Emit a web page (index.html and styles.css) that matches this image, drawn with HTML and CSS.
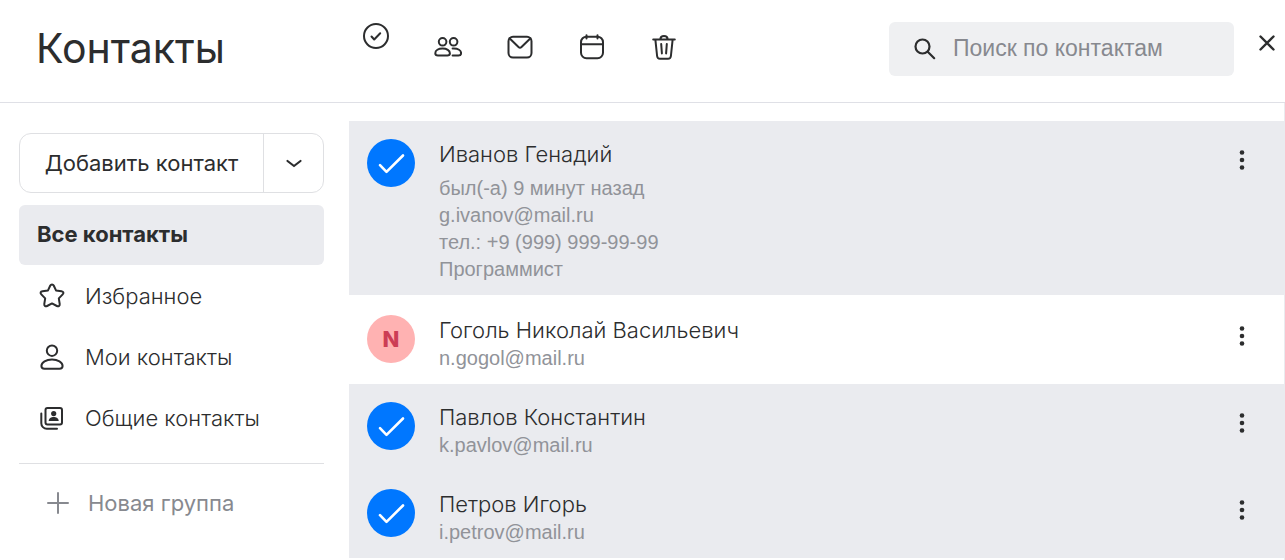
FILE: index.html
```html
<!DOCTYPE html>
<html lang="ru">
<head>
<meta charset="utf-8">
<meta name="viewport" content="width=device-width, initial-scale=1">
<title>Контакты</title>
<link rel="stylesheet" href="styles.css">
</head>
<body>
<div class="app">
  <header class="header">
    <h1 class="title">Контакты</h1>
    <div class="toolbar">
      <button class="tool tool-select" type="button" aria-label="Выбрать все">
        <svg width="28" height="28" viewBox="0 0 28 28"><circle cx="14" cy="14" r="12"/><path d="M9.500 14.500l2.700 3 6-6.300"/></svg>
      </button>
      <button class="tool" type="button" aria-label="Группы">
        <svg width="28" height="28" viewBox="0 0 28 28"><circle cx="8.600" cy="8.800" r="3.800"/><circle cx="19.600" cy="8.800" r="3.800"/><path d="M4 22.600h9.200c1.800 0 2.700-.8 2.700-2.300 0-2.900-3.200-4.700-7.300-4.700s-7.300 1.800-7.300 4.700c0 1.500.9 2.300 2.700 2.300zM18.600 15.600h1.200c4.100 0 7.300 1.800 7.300 4.700 0 1.500-.9 2.300-2.700 2.300h-5.800"/></svg>
      </button>
      <button class="tool" type="button" aria-label="Написать письмо">
        <svg width="28" height="28" viewBox="0 0 28 28"><rect x="2.500" y="3.800" width="23" height="20.800" rx="4.500"/><path d="M3.500 5.200l9 8.800a2.200 2.200 0 0 0 3 0l9-8.800"/></svg>
      </button>
      <button class="tool" type="button" aria-label="Создать встречу">
        <svg width="28" height="28" viewBox="0 0 28 28"><rect x="3" y="3.700" width="22" height="21.500" rx="5.500"/><path d="M3 11.200h22M8.500 2.200v3.200M19.500 2.200v3.200"/></svg>
      </button>
      <button class="tool" type="button" aria-label="Удалить">
        <svg width="28" height="28" viewBox="0 0 28 28"><path d="M3.200 6.600h21.600M5.400 6.800l1.700 16.200c.2 2 1.100 2.800 2.900 2.800h8c1.800 0 2.700-.8 2.900-2.800l1.700-16.200M10.300 6.300c.4-4.400 7-4.400 7.400 0M11.200 11l.7 9.400M16.800 11l-.7 9.400"/></svg>
      </button>
    </div>
    <label class="search">
      <svg width="24" height="24" viewBox="0 0 24 24"><circle cx="9.500" cy="9.500" r="7"/><path d="M14.700 14.700l6.500 6.500"/></svg>
      <input class="search-input" type="text" placeholder="Поиск по контактам" aria-label="Поиск по контактам">
    </label>
    <button class="close" type="button" aria-label="Закрыть">
      <svg width="18" height="18" viewBox="0 0 18 18"><path d="M2.500 2.500l13 13M15.500 2.500l-13 13"/></svg>
    </button>
  </header>
  <div class="body">
    <aside class="sidebar">
      <div class="add">
        <button class="add-main" type="button">Добавить контакт</button>
        <button class="add-more" type="button" aria-label="Ещё">
          <svg width="18" height="10" viewBox="0 0 18 10"><path d="M2.500 3l6.500 5 6.500-5"/></svg>
        </button>
      </div>
      <nav class="nav">
        <a class="nav-item nav-item-active" href="#all">Все контакты</a>
        <a class="nav-item" href="#favorites">
          <svg width="28" height="28" viewBox="0 0 28 28"><path d="M12.300 3.500c.7-1.500 2.700-1.500 3.400 0l2.300 4.900 5.500.8c2 .3 2.500 1.900 1.200 3.200l-3.900 4 .9 5.500c.3 1.900-1.100 3-2.800 2.100L14 21.400 9.100 24c-1.700.9-3.100-.2-2.800-2.100l.9-5.500-3.900-4C2 11.100 2.500 9.500 4.500 9.200l5.500-.8z"/></svg>
          Избранное
        </a>
        <a class="nav-item" href="#mine">
          <svg width="28" height="28" viewBox="0 0 28 28"><circle cx="14" cy="7.700" r="5.200"/><path d="M6.500 25.800h15c2 0 3.100-1 3.100-2.700 0-3.800-4.800-6.600-10.600-6.600S3.400 19.300 3.400 23.100c0 1.700 1.100 2.700 3.100 2.700z"/></svg>
          Мои контакты
        </a>
        <a class="nav-item" href="#shared">
          <svg width="28" height="28" viewBox="0 0 28 28"><rect x="7.500" y="4" width="16.500" height="16.500" rx="2"/><path d="M3.300 9.500v9.700a5.500 5.500 0 0 0 5.500 5.500H19"/><g class="solid"><circle cx="15.700" cy="9.600" r="2.600"/><path d="M10.700 17c0-5.300 10-5.300 10 0z"/></g></svg>
          Общие контакты
        </a>
      </nav>
      <button class="new-group" type="button">
        <svg width="24" height="24" viewBox="0 0 24 24"><path d="M12 2v20M2 12h20"/></svg>
        Новая группа
      </button>
    </aside>
    <main class="list">
      <article class="contact contact-selected">
        <label class="pick">
          <input type="checkbox" class="pick-box" checked aria-label="Иванов Генадий">
          <svg width="48" height="48" viewBox="0 0 48 48"><path d="M13 26.200l6.500 6.600L36 16.500"/></svg>
        </label>
        <div class="info info-full">
          <h2 class="name">Иванов Генадий</h2>
          <p class="line">был(-а) 9 минут назад</p>
          <p class="line">g.ivanov@mail.ru</p>
          <p class="line">тел.: +9 (999) 999-99-99</p>
          <p class="line">Программист</p>
        </div>
        <button class="menu" type="button" aria-label="Действия"><svg width="24" height="24" viewBox="0 0 24 24"><circle cx="12" cy="4.500" r="2.300"/><circle cx="12" cy="12" r="2.300"/><circle cx="12" cy="19.500" r="2.300"/></svg></button>
      </article>
      <article class="contact contact-plain">
        <div class="avatar">N</div>
        <div class="info">
          <h2 class="name">Гоголь Николай Васильевич</h2>
          <p class="line">n.gogol@mail.ru</p>
        </div>
        <button class="menu" type="button" aria-label="Действия"><svg width="24" height="24" viewBox="0 0 24 24"><circle cx="12" cy="4.500" r="2.300"/><circle cx="12" cy="12" r="2.300"/><circle cx="12" cy="19.500" r="2.300"/></svg></button>
      </article>
      <article class="contact contact-selected">
        <label class="pick">
          <input type="checkbox" class="pick-box" checked aria-label="Павлов Константин">
          <svg width="48" height="48" viewBox="0 0 48 48"><path d="M13 26.200l6.500 6.600L36 16.500"/></svg>
        </label>
        <div class="info">
          <h2 class="name">Павлов Константин</h2>
          <p class="line">k.pavlov@mail.ru</p>
        </div>
        <button class="menu" type="button" aria-label="Действия"><svg width="24" height="24" viewBox="0 0 24 24"><circle cx="12" cy="4.500" r="2.300"/><circle cx="12" cy="12" r="2.300"/><circle cx="12" cy="19.500" r="2.300"/></svg></button>
      </article>
      <article class="contact contact-selected">
        <label class="pick">
          <input type="checkbox" class="pick-box" checked aria-label="Петров Игорь">
          <svg width="48" height="48" viewBox="0 0 48 48"><path d="M13 26.200l6.500 6.600L36 16.500"/></svg>
        </label>
        <div class="info">
          <h2 class="name">Петров Игорь</h2>
          <p class="line">i.petrov@mail.ru</p>
        </div>
        <button class="menu" type="button" aria-label="Действия"><svg width="24" height="24" viewBox="0 0 24 24"><circle cx="12" cy="4.500" r="2.300"/><circle cx="12" cy="12" r="2.300"/><circle cx="12" cy="19.500" r="2.300"/></svg></button>
      </article>
    </main>
  </div>
</div>
</body>
</html>
```
FILE: styles.css
```css
* {
  box-sizing: border-box;
}

body {
  margin: 0;
  background: #fff;
  color: #2c2d2e;
  font-family: Inter, "Open Sans", sans-serif;
  font-size: 22px;
  line-height: 28px;
}

h1, h2, p {
  margin: 0;
  font-weight: 400;
}

button {
  margin: 0;
  padding: 0;
  border: 0;
  background: none;
  color: inherit;
  font: inherit;
  cursor: pointer;
}

svg {
  display: block;
  flex: none;
  fill: none;
  stroke: currentColor;
  stroke-width: 2;
  stroke-linecap: round;
  stroke-linejoin: round;
}

.app {
  display: flex;
  flex-direction: column;
  min-height: 100vh;
}

.header {
  display: flex;
  align-items: center;
  padding: 22px 9px 26px 36px;
  border-bottom: 1px solid #dfe0e6;
}

.title {
  width: 326px;
  padding-bottom: 2px;
  font-size: 41px;
  line-height: 48px;
}

.toolbar {
  display: flex;
  align-items: center;
  gap: 44px;
  margin-right: auto;
  padding-bottom: 4px;
}

.tool-select {
  padding-bottom: 22px;
}

.search {
  display: flex;
  align-items: center;
  gap: 16px;
  width: 345px;
  height: 54px;
  padding: 0 24px;
  border-radius: 6px;
  background: #eff0f2;
}

.search svg {
  stroke-width: 2.2;
}

.search-input {
  flex: 1;
  min-width: 0;
  padding: 0 0 2px;
  border: 0;
  outline: 0;
  background: none;
  color: inherit;
  font-family: "Liberation Sans", Arial, sans-serif;
  font-size: 23px;
}

.search-input::placeholder {
  color: #87898f;
  opacity: 1;
}

.close {
  margin: 0 0 12px 24px;
}

.close svg {
  stroke-width: 2.4;
}

.body {
  display: flex;
  flex: 1;
}

.sidebar {
  flex: none;
  width: 349px;
  padding: 30px 25px 0 19px;
}

.add {
  display: flex;
  height: 60px;
  margin-bottom: 12px;
  border: 1px solid #dfe0e3;
  border-radius: 12px;
}

.add-main {
  flex: 1;
}

.add-more {
  display: flex;
  align-items: center;
  justify-content: center;
  width: 60px;
  border-left: 1px solid #dfe0e3;
}

.add-more svg {
  stroke-width: 2.2;
}

.nav {
  padding-bottom: 15px;
  border-bottom: 1px solid #dfe0e3;
}

.nav-item {
  display: flex;
  align-items: center;
  gap: 19px;
  height: 61px;
  padding-left: 19px;
  color: inherit;
  font-weight: 300;
  text-decoration: none;
}

.nav-item-active {
  height: 60px;
  padding: 0 18px 2px;
  border-radius: 6px;
  background: #eaebef;
  font-weight: 700;
}

.new-group {
  display: flex;
  align-items: center;
  gap: 18px;
  width: 100%;
  height: 78px;
  padding-left: 27px;
  color: #87898f;
}

.list {
  flex: 1;
  min-width: 0;
  padding-top: 18px;
  border-right: 1px solid #eaebef;
}

.contact {
  display: flex;
  align-items: flex-start;
  gap: 24px;
  padding: 18px 30px 12px 18px;
}

.contact-selected {
  background: #eaebef;
}

.contact-plain {
  padding-top: 20px;
}

.pick {
  display: grid;
  flex: none;
  color: #fff;
  cursor: pointer;
}

.pick-box,
.pick svg {
  grid-area: 1 / 1;
}

.pick svg {
  stroke-width: 2.6;
}

.pick-box {
  width: 48px;
  height: 48px;
  margin: 0;
  border-radius: 50%;
  background: #0077ff;
  appearance: none;
}

.avatar {
  display: flex;
  flex: none;
  align-items: center;
  justify-content: center;
  width: 48px;
  height: 48px;
  border-radius: 50%;
  background: #ffb2b2;
  color: #cc3d55;
  font-weight: 800;
}

.info {
  flex: 1;
  min-width: 0;
}

.info-full .name {
  margin-bottom: 6px;
}

.name {
  font-size: 22px;
  font-weight: 300;
  line-height: 30px;
}

.line {
  color: #919399;
  font-family: "Liberation Sans", Arial, sans-serif;
  font-size: 20px;
  line-height: 27px;
}

.menu {
  margin-top: 9px;
}

.menu svg {
  fill: currentColor;
  stroke: none;
}

.solid {
  fill: currentColor;
  stroke: none;
}
```
